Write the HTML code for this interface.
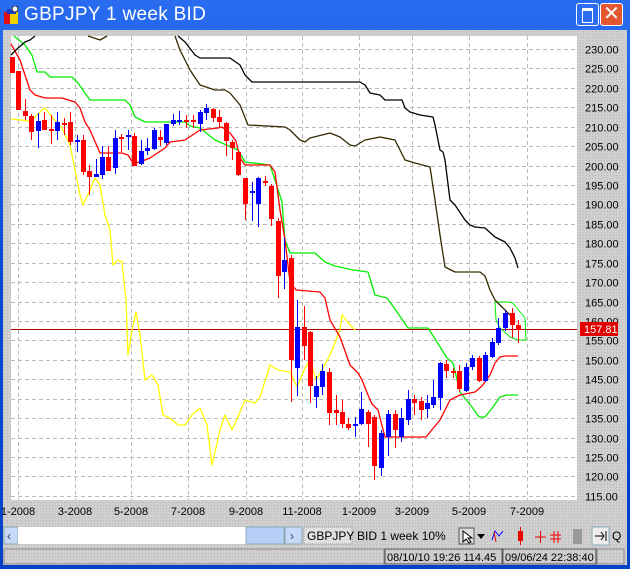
<!DOCTYPE html>
<html><head><meta charset="utf-8">
<style>
html,body{margin:0;padding:0;width:630px;height:569px;overflow:hidden;background:#0a52dd;font-family:"Liberation Sans",sans-serif}
.win{position:absolute;left:0;top:0;width:630px;height:569px;background:linear-gradient(#2a6cf0,#0548d8 50%,#0442c8)}
.title{position:absolute;left:24px;top:4px;color:#fff;font-size:19px;letter-spacing:0.3px}
.body{position:absolute;left:3px;top:30px;width:624px;height:535px;background:#cfcfcf;background-image:radial-gradient(#b8b8b8 0.6px,transparent 0.7px);background-size:3px 3px}
.btn{position:absolute;top:3px;width:21px;height:21px;border:1px solid #fff;border-radius:3px}
</style></head><body>
<div class="win">
  <svg style="position:absolute;left:3px;top:6px" width="18" height="20"><rect x="1" y="6" width="6" height="12" fill="#e01010"/><rect x="7" y="6" width="8" height="12" fill="#f0d000"/><rect x="4" y="3" width="9" height="5" fill="#1a3ad0"/><circle cx="12" cy="3" r="3" fill="#fff" stroke="#333"/></svg>
  <div class="title">GBPJPY 1 week BID</div>
  <div class="btn" style="left:576px;background:#2d6ef0"><div style="position:absolute;left:5px;top:4px;width:9px;height:11px;border:1px solid #fff;border-top:3px solid #fff"></div></div>
  <div class="btn" style="left:600px;background:#e2572f;color:#fff;font-size:20px;text-align:center;line-height:21px">✕</div>
  <div class="body"></div>
  <svg id="c" style="position:absolute;left:0;top:0" width="630" height="569" font-family="Liberation Sans, sans-serif">
    <rect x="11" y="36" width="566" height="464" fill="#fff"/>
    <g id="grid" stroke="#bbb" stroke-dasharray="4,3" stroke-width="1"></g>
    <g id="lab" font-size="11" fill="#000"></g>
    <line x1="11" y1="329.5" x2="577" y2="329.5" stroke="#a00" stroke-width="1"/>
    <g fill="none" stroke-width="1.3" stroke-linejoin="round">
      <polyline stroke="#ffff00" points="11,119 30,121 35,117 42,110 45,108 52,117 62,128 70,145 75,170 80,195 83,205 90,190 95,178 100,185 105,215 110,230 113,265 118,260 122,262 126,300 128,355 132,330 136,312 140,335 145,380 152,375 158,385 163,415 170,418 178,425 185,425 192,415 200,408 207,425 212,465 220,430 225,415 232,430 240,412 245,400 255,403 260,397 270,365 278,370 290,372 297,387 305,368 310,360 316,380 322,370 330,355 340,330 342,315 350,325 355,330"/>
      <polyline stroke="#00ee00" points="14,36 25,45 32,55 37,72 45,72 50,77 72,77 78,83 90,100 125,100 130,105 135,117 145,122 185,122 190,126 200,128 215,140 238,150 245,162 270,165 275,180 282,202 285,240 290,253 315,253 325,262 335,266 353,270 368,272 375,295 387,298 397,312 408,328 428,328 437,342 447,358 453,363 460,392 472,407 479,417 485,417 493,407 500,397 507,395 518,395"/>
      <polyline stroke="#00ee00" stroke-width="1" points="496,320 495,302 507,302 513,303 525,318 526,340 518,340 510,337 500,328 496,320"/>
      <polyline stroke="#ff0000" points="11,44 20,60 25,75 30,90 35,95 45,98 62,98 75,102 80,108 85,122 90,130 100,153 122,153 128,155 133,163 140,162 150,158 165,148 170,142 185,140 200,130 218,128 222,127 230,133 236,141 240,158 245,165 270,165 275,172 280,210 285,240 290,282 296,290 320,292 325,298 330,320 340,337 350,365 358,373 362,380 368,395 372,404 378,410 385,437 426,437 440,420 450,400 460,395 475,392 482,386 490,375 495,363 500,357 505,356 518,356"/>
      <polyline stroke="#000" points="11,55 18,48 25,42 30,40 35,36"/>
      <polyline stroke="#000" points="178,36 185,42 195,55 200,58 230,58 240,65 245,75 252,82 360,82 365,85 370,93 380,95 385,100 402,100 405,108 410,112 420,115 433,117 435,125 440,150 443,152 445,160 450,200 455,205 465,220 470,225 475,227 485,228 495,237 505,242 510,248 515,258 518,268"/>
      <polyline stroke="#332a00" points="88,36 100,40 107,36"/>
      <polyline stroke="#332a00" points="175,36 180,50 190,70 200,85 215,90 225,90 230,93 240,105 248,125 285,127 290,130 300,140 305,142 310,138 330,133 340,137 350,145 355,146 365,140 380,137 395,140 405,160 415,163 430,167 435,200 440,235 445,267 455,272 480,272 485,276 490,290 495,300 505,310 515,320"/>
    </g>
    <g id="cd"></g>
    <rect x="580" y="322" width="38" height="14" fill="#e00000"/>
    <text x="584" y="333" font-size="11" fill="#fff">157.81</text>
    <!-- toolbar -->
    <rect x="4" y="527" width="14" height="17" fill="#c8d8f8" stroke="#8aa"/>
    <text x="7" y="540" font-size="12" fill="#246">‹</text>
    <rect x="18" y="527" width="228" height="17" fill="#fff"/>
    <rect x="246" y="527" width="38" height="17" fill="#b8d0f8" stroke="#8ab"/>
    <rect x="285" y="527" width="17" height="17" fill="#c8d8f8" stroke="#8aa"/>
    <text x="290" y="540" font-size="12" fill="#246">›</text>
    <rect x="304" y="527" width="48" height="17" fill="#e0e0e0" stroke="#999" stroke-dasharray="1,1"/>
    <text x="307" y="540" font-size="12">GBPJPY</text>
    <text x="357" y="540" font-size="12">BID  1 week  10%</text>
    <rect x="459" y="528" width="15" height="16" fill="#ddd" stroke="#555"/>
    <path d="M463 531 L463 542 L466 539 L469 543 L471 542 L468 538 L472 538 Z" fill="#fff" stroke="#000"/>
    <path d="M477 534 L485 534 L481 539 Z" fill="#000"/>
    <path d="M492 540 L495 531 L499 536 L503 531" stroke="#00f" fill="none"/><path d="M494 532 L496 542" stroke="#e00"/>
    <rect x="518" y="531" width="5" height="10" fill="#e00"/><line x1="520.5" y1="527" x2="520.5" y2="545" stroke="#e00"/>
    <path d="M535 537h11M540.5 531v12" stroke="#e00"/>
    <path d="M550 535h11M550 539h11M554 531v12M558 531v12" stroke="#e00"/>
    <rect x="573" y="529" width="9" height="15" fill="#999"/>
    <rect x="592" y="527" width="17" height="18" fill="#eee" stroke="#8ab"/>
    <path d="M595 536h9M601 532l3 4-3 4M606 531v10" stroke="#000" fill="none"/>
    <text x="612" y="540" font-size="12">Q</text>
    <rect x="4" y="549" width="380" height="15" fill="none" stroke="#888"/>
    <rect x="385" y="549" width="117" height="15" fill="none" stroke="#555"/>
    <text x="387" y="561" font-size="11">08/10/10 19:26 114.45</text>
    <rect x="503" y="549" width="93" height="15" fill="none" stroke="#555"/>
    <text x="505" y="561" font-size="11">09/06/24 22:38:40</text>
    <rect x="597" y="549" width="27" height="15" fill="none" stroke="#888"/>
  </svg>
</div>
<script>
var ns="http://www.w3.org/2000/svg";
function el(p,t,a){var e=document.createElementNS(ns,t);for(var k in a)e.setAttribute(k,a[k]);p.appendChild(e);return e;}
var g=document.getElementById('grid'),lab=document.getElementById('lab');
for(var i=0;i<=23;i++){var p=230-5*i,y=Math.round(49+i*19.43)+0.5;
 el(g,'line',{x1:11,y1:y,x2:577,y2:y});
 var t=el(lab,'text',{x:585,y:y+4});t.textContent=p.toFixed(2);}
var xs=[18,75,131,188,246,302,359,412,469,527],ls=['1-2008','3-2008','5-2008','7-2008','9-2008','11-2008','1-2009','3-2009','5-2009','7-2009'];
for(var i=0;i<xs.length;i++){el(g,'line',{x1:xs[i]+.5,y1:36,x2:xs[i]+.5,y2:500});
 var t=el(lab,'text',{x:xs[i],y:515,'text-anchor':'middle'});t.textContent=ls[i];}
// x, bodyTop, bodyBot, hi, lo, color
var C=[[12,57,73,57,73,'r'],[18,71,110,71,110,'r'],[25,111,116,99,120,'r'],[31,116,132,114,140,'r'],[38,121,131,113,148,'b'],[44,120,130,112,130,'r'],[51,129,131,115,144,'r'],[57,122,131,112,140,'b'],[64,123,125,118,135,'r'],[70,122,142,112,145,'r'],[77,140,142,135,152,'b'],[83,140,172,135,175,'r'],[89,171,177,165,195,'r'],[96,174,177,159,177,'b'],[102,157,175,146,179,'b'],[108,157,171,146,170,'r'],[115,138,168,130,174,'b'],[121,137,139,134,152,'r'],[128,135,137,130,150,'b'],[134,136,166,133,166,'r'],[141,151,164,140,165,'b'],[147,148,151,138,155,'b'],[154,130,149,128,150,'b'],[160,137,140,130,146,'r'],[166,124,143,124,145,'b'],[173,120,124,114,126,'b'],[179,120,122,111,125,'b'],[186,120,122,115,128,'r'],[193,120,122,115,128,'r'],[200,112,124,110,132,'b'],[206,108,113,104,120,'b'],[213,109,118,108,122,'r'],[219,117,122,110,128,'r'],[226,123,141,122,156,'r'],[232,142,148,140,160,'r'],[238,152,175,150,176,'r'],[245,178,204,178,220,'r'],[252,191,192,182,221,'b'],[258,178,204,177,227,'b'],[265,181,183,176,186,'r'],[271,186,219,184,226,'r'],[278,221,276,218,298,'r'],[284,260,272,238,289,'b'],[291,258,360,255,402,'r'],[297,327,368,300,396,'b'],[304,327,346,306,360,'r'],[310,332,386,331,403,'r'],[316,386,397,376,408,'b'],[322,371,387,364,395,'b'],[329,372,413,368,425,'r'],[336,410,413,395,425,'r'],[342,412,424,400,428,'r'],[348,424,428,418,430,'r'],[355,424,426,417,437,'b'],[361,409,424,392,425,'b'],[368,412,424,410,447,'r'],[374,417,466,415,480,'r'],[381,433,468,430,476,'b'],[388,414,437,410,456,'b'],[395,414,430,410,448,'r'],[401,418,437,408,442,'b'],[408,399,420,390,425,'b'],[414,399,403,395,415,'r'],[421,401,410,397,420,'r'],[427,403,409,395,418,'b'],[433,397,405,380,408,'b'],[440,363,398,362,410,'b'],[446,364,371,360,378,'r'],[453,371,372,368,378,'r'],[459,371,389,365,392,'r'],[466,367,391,363,392,'b'],[472,358,367,355,370,'b'],[479,358,381,356,382,'r'],[485,355,381,352,382,'b'],[492,342,357,338,358,'b'],[498,328,343,318,345,'b'],[505,313,328,310,331,'b'],[512,313,325,308,338,'r'],[518,325,330,320,343,'r']];
var cd=document.getElementById('cd');
C.forEach(function(c){var col=c[5]=='r'?'#ff0000':'#0000ff';
 el(cd,'line',{x1:c[0]+.5,y1:c[3],x2:c[0]+.5,y2:c[4],stroke:col,'stroke-width':1});
 el(cd,'rect',{x:c[0]-2,y:c[1],width:5,height:Math.max(2,c[2]-c[1]),fill:col});});
</script>
</body></html>
